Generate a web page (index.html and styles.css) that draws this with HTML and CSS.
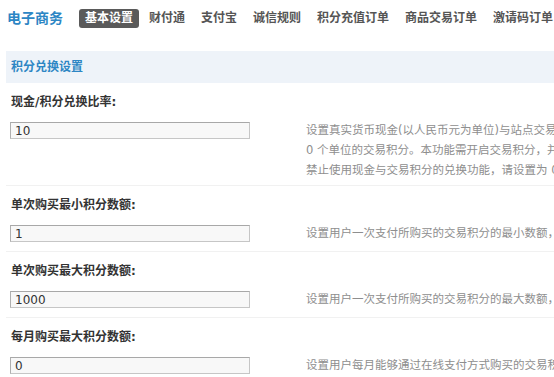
FILE: index.html
```html
<!DOCTYPE html>
<html lang="zh-CN">
<head>
<meta charset="utf-8">
<title>电子商务 - 基本设置</title>
<link rel="stylesheet" href="styles.css">
</head>
<body>
<div class="page">
  <nav class="topnav">
    <h1 class="brand">电子商务</h1>
    <ul class="tabs">
      <li class="tab active">基本设置</li>
      <li class="tab">财付通</li>
      <li class="tab">支付宝</li>
      <li class="tab">诚信规则</li>
      <li class="tab">积分充值订单</li>
      <li class="tab">商品交易订单</li>
      <li class="tab">激请码订单</li>
    </ul>
  </nav>
  <section class="panel">
    <h2 class="panel-title">积分兑换设置</h2>
    <div class="setting">
      <div class="setting-label">现金/积分兑换比率:</div>
      <div class="setting-body">
        <input class="setting-input" type="text" value="10">
        <div class="setting-tip">设置真实货币现金(以人民币元为单位)与站点交易积分间的兑换比率，例如设置为 10，则 1 元人民币可以兑换 1<br>0 个单位的交易积分。本功能需开启交易积分，并在交易积分的设置中启用“论坛积分兑换”才可使用。如需<br>禁止使用现金与交易积分的兑换功能，请设置为 0</div>
      </div>
    </div>
    <div class="setting">
      <div class="setting-label">单次购买最小积分数额:</div>
      <div class="setting-body">
        <input class="setting-input" type="text" value="1">
        <div class="setting-tip">设置用户一次支付所购买的交易积分的最小数额，单位为交易积分，0 为不限制</div>
      </div>
    </div>
    <div class="setting">
      <div class="setting-label">单次购买最大积分数额:</div>
      <div class="setting-body">
        <input class="setting-input" type="text" value="1000">
        <div class="setting-tip">设置用户一次支付所购买的交易积分的最大数额，单位为交易积分，0 为不限制</div>
      </div>
    </div>
    <div class="setting">
      <div class="setting-label">每月购买最大积分数额:</div>
      <div class="setting-body">
        <input class="setting-input" type="text" value="0">
        <div class="setting-tip">设置用户每月能够通过在线支付方式购买的交易积分的最大数额，0 为不限制</div>
      </div>
    </div>
  </section>
</div>
</body>
</html>
```
FILE: styles.css
```css
html, body {
  margin: 0;
  padding: 0;
  overflow: hidden;
  background: #ffffff;
}

body {
  font-family: "DejaVu Sans", "Noto Sans CJK SC", sans-serif;
  font-size: 12px;
  color: #333333;
}

.topnav {
  display: flex;
  align-items: center;
  padding: 9px 0 0 7px;
  height: 19px;
  white-space: nowrap;
}

.brand {
  margin: 0;
  width: 72px;
  flex: none;
  font-size: 14px;
  font-weight: bold;
  line-height: 19px;
  color: #2d86c4;
}

.tabs {
  display: flex;
  list-style: none;
  margin: 0;
  padding: 0;
}

.tab {
  padding: 0 6px;
  margin-right: 4px;
  line-height: 19px;
  font-weight: bold;
  color: #555555;
  border-radius: 3px;
}

.tab.active {
  background: #5a5a5a;
  color: #ffffff;
}

.panel {
  margin: 23px 0 0 6px;
}

.panel-title {
  margin: 0;
  height: 32px;
  line-height: 32px;
  padding-left: 5px;
  background: #eef3f9;
  color: #2d86c4;
  font-size: 12px;
  font-weight: bold;
}

.setting {
  border-bottom: 1px solid #f1f1f1;
}

.setting-label {
  padding: 9px 0 8px 5px;
  line-height: 20px;
  font-weight: bold;
  color: #333333;
  white-space: nowrap;
}

.setting-body {
  display: flex;
  align-items: flex-start;
}

.setting-input {
  flex: none;
  box-sizing: border-box;
  width: 240px;
  height: 17px;
  margin: 2px 0 9px 4px;
  padding: 0 4px;
  border: 1px solid #c6c6c6;
  border-top-color: #a8a8a8;
  border-left-color: #b0b0b0;
  background: #f8f8f8;
  font-family: "DejaVu Sans", sans-serif;
  font-size: 12px;
  color: #333333;
  outline: none;
}

.setting-tip {
  margin-left: 56px;
  padding-bottom: 5px;
  line-height: 20px;
  font-size: 11.5px;
  color: #8e8e8e;
  white-space: nowrap;
}
```
